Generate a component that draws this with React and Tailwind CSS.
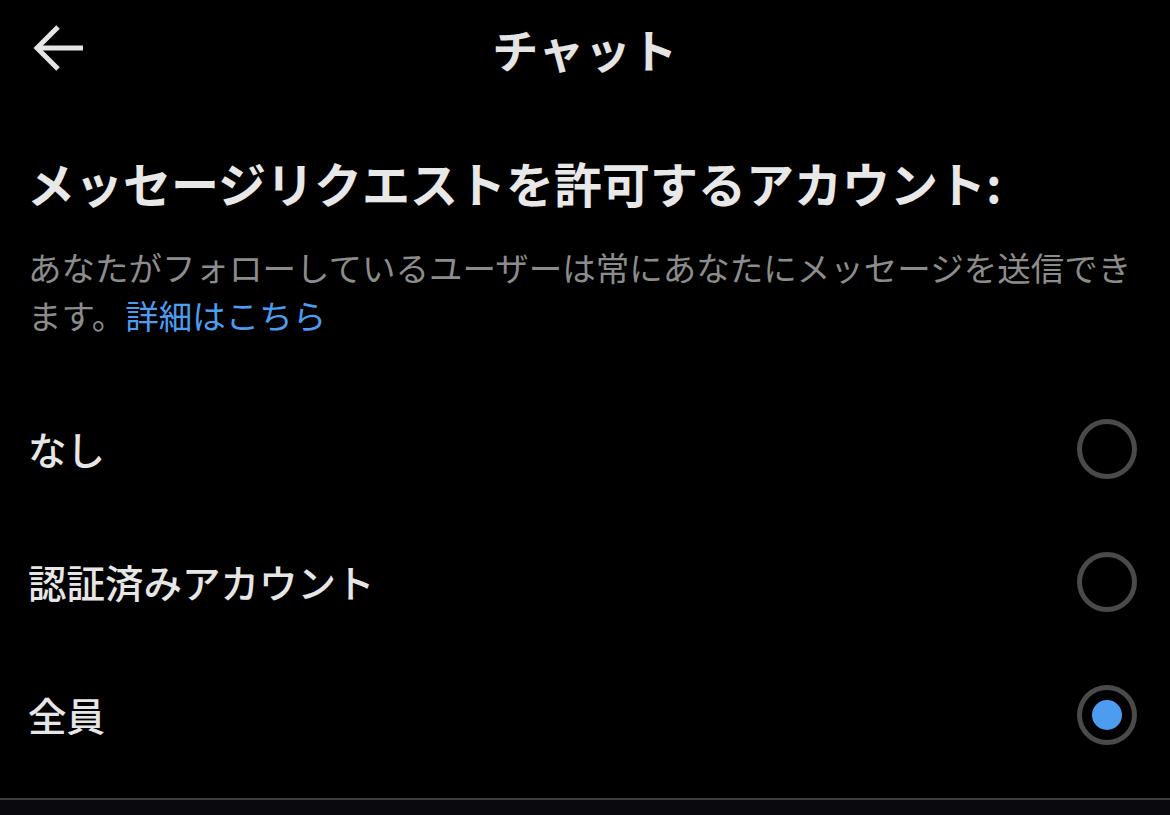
import React, { useState } from 'react';

const font = { fontFamily: '"Noto Sans CJK JP", "Noto Sans", sans-serif' };

const options = [
  { id: 'none', label: 'なし' },
  { id: 'verified', label: '認証済みアカウント' },
  { id: 'everyone', label: '全員' },
];

const Radio = ({ checked }) => (
  <span className="flex h-[60px] w-[60px] items-center justify-center rounded-full border-[5px] border-[#4a4a4a]">
    {checked && <span className="h-[30px] w-[30px] rounded-full bg-[#4c9df0]" />}
  </span>
);

export default function App() {
  const [selected, setSelected] = useState('everyone');

  return (
    <div className="flex h-[815px] w-[1170px] flex-col overflow-hidden bg-black text-[#e6e6e6]" style={font}>
      {/* header */}
      <div className="grid h-[96px] shrink-0 grid-cols-[1fr_auto_1fr] items-center">
        <button className="ml-[33px] flex h-[48px] w-[52px] items-center text-[#e4e4e4]">
          <svg width="52" height="48" viewBox="0 0 52 48" fill="none" stroke="currentColor" strokeWidth="5" strokeLinecap="butt">
            <path d="M50 24H5" />
            <path d="M25 3L4 24l21 21" strokeLinejoin="miter" />
          </svg>
        </button>
        <h1 className="text-[46px] font-bold leading-none tracking-[0.5px] text-[#e4e4e4]">チャット</h1>
        <div />
      </div>

      {/* section title */}
      <h2 className="mt-[58px] pl-[27px] text-[48px] font-bold leading-[56px] text-[#e8e8e8]">
        メッセージリクエストを許可するアカウント:
      </h2>

      <p className="mt-[33px] whitespace-nowrap pl-[28px] text-[33.5px] leading-[48px] text-[#8c8c8c]">
        あなたがフォローしているユーザーは常にあなたにメッセージを送信でき
        <br />
        ます。<a className="text-[#4c9df0]">詳細はこちら</a>
      </p>

      {/* options */}
      <div className="mt-[43px] flex flex-col">
        {options.map((o) => (
          <label
            key={o.id}
            onClick={() => setSelected(o.id)}
            className="flex h-[133px] cursor-pointer items-center justify-between pl-[28px] pr-[33px]"
          >
            <span className="text-[38.5px] font-medium leading-none text-[#e6e6e6]">{o.label}</span>
            <Radio checked={selected === o.id} />
          </label>
        ))}
      </div>

      <div className="mt-[17px] flex-1 border-t-2 border-[#3d3d3d] bg-[#0a0a0e]" />
    </div>
  );
}
